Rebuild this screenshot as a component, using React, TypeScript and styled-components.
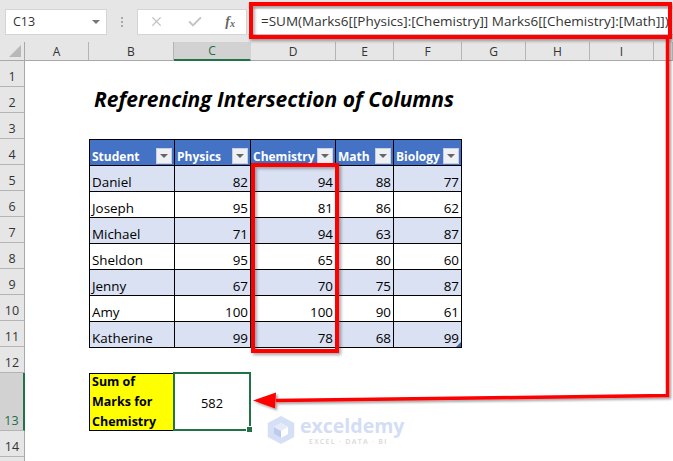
import { Check, X } from 'lucide-react';
import styled, { createGlobalStyle } from 'styled-components';

const COLUMNS = [
  { name: 'A', width: 64 },
  { name: 'B', width: 85 },
  { name: 'C', width: 77, selected: true },
  { name: 'D', width: 85 },
  { name: 'E', width: 58 },
  { name: 'F', width: 68 },
  { name: 'G', width: 64 },
  { name: 'H', width: 64 },
  { name: 'I', width: 64 },
  { name: '', width: 19 },
];

const ROWS = [
  { name: '1', height: 26 },
  { name: '2', height: 26 },
  { name: '3', height: 26 },
  { name: '4', height: 26 },
  { name: '5', height: 26 },
  { name: '6', height: 26 },
  { name: '7', height: 26 },
  { name: '8', height: 26 },
  { name: '9', height: 26 },
  { name: '10', height: 26 },
  { name: '11', height: 26 },
  { name: '12', height: 26 },
  { name: '13', height: 58, selected: true },
  { name: '14', height: 26 },
  { name: '', height: 26 },
];

const HEADERS = ['Student', 'Physics', 'Chemistry', 'Math', 'Biology'];

const MARKS: [string, number, number, number, number][] = [
  ['Daniel', 82, 94, 88, 77],
  ['Joseph', 95, 81, 86, 62],
  ['Michael', 71, 94, 63, 87],
  ['Sheldon', 95, 65, 80, 60],
  ['Jenny', 67, 70, 75, 87],
  ['Amy', 100, 100, 90, 61],
  ['Katherine', 99, 78, 68, 99],
];

const App = () => (
  <>
    <GlobalStyle />
    <Window>
      <FormulaBar>
        <NameBox>
          C13
          <NameCaret />
        </NameBox>
        <Grip>
          <i />
          <i />
          <i />
        </Grip>
        <FormulaButtons>
          <X size={15} strokeWidth={2} color="#c4c4c4" />
          <Check size={16} strokeWidth={3} color="#c4c4c4" />
          <FxLabel>
            f<sub>x</sub>
          </FxLabel>
        </FormulaButtons>
        <FormulaInput>=SUM(Marks6[[Physics]:[Chemistry]] Marks6[[Chemistry]:[Math]])</FormulaInput>
      </FormulaBar>

      <ColumnHeaders>
        <CornerCell>
          <CornerMark />
        </CornerCell>
        {COLUMNS.map((c, i) => (
          <ColumnHeader key={i} $width={c.width} $selected={c.selected}>
            {c.name}
          </ColumnHeader>
        ))}
      </ColumnHeaders>

      <SheetArea>
        <RowHeaders>
          {ROWS.map((r, i) => (
            <RowHeader key={i} $height={r.height} $selected={r.selected}>
              {r.name}
            </RowHeader>
          ))}
        </RowHeaders>

        <Sheet>
          <Title>Referencing Intersection of Columns</Title>

          <MarksTable>
            {HEADERS.map((h) => (
              <HeaderCell key={h}>
                {h}
                <FilterButton>
                  <FilterCaret />
                </FilterButton>
              </HeaderCell>
            ))}
            {MARKS.map((row, r) =>
              row.map((value, c) => (
                <Cell key={`${r}-${c}`} $band={r % 2 === 0} $numeric={c > 0}>
                  {value}
                </Cell>
              )),
            )}
            <ResizeHandle />
          </MarksTable>

          <SumLabel>
            <span>
              Sum of
              <br />
              Marks for
              <br />
              Chemistry
            </span>
          </SumLabel>
          <SumValue>
            582
            <FillHandle />
          </SumValue>

          <ChemistryHighlight />

          <Watermark>
            <svg width="32" height="30" viewBox="0 0 36 34">
              <path d="M18 1 33 9v16l-15 8-15-8V9z" fill="#d5dff5" />
              <path d="M18 9l8 4.5v8L18 26l-8-4.5v-8z" fill="#fff" />
              <path d="M18 9l8 4.5-8 4.5-8-4.5z" fill="#e6ebf8" />
              <path d="M18 18v8l-8-4.5v-8z" fill="#bccbee" />
            </svg>
            <WatermarkText>
              <strong>exceldemy</strong>
              <span>EXCEL · DATA · BI</span>
            </WatermarkText>
          </Watermark>
        </Sheet>
      </SheetArea>

      <FormulaHighlight />

      <ArrowLayer width="673" height="461" viewBox="0 0 673 461">
        <defs>
          <filter id="soft" x="-5%" y="-5%" width="110%" height="110%">
            <feDropShadow dx="2" dy="2" stdDeviation="1.2" floodColor="#000" floodOpacity="0.35" />
          </filter>
        </defs>
        <g filter="url(#soft)">
          <path d="M667.5 38V395.5L276 400.5" fill="none" stroke="#fe0000" strokeWidth="3.5" />
          <path d="M253 400.5 276 392.5 275 408.5z" fill="#fe0000" />
        </g>
      </ArrowLayer>
    </Window>
  </>
);

const GlobalStyle = createGlobalStyle`
  html, body {
    margin: 0;
    padding: 0;
    background: #fff;
  }

  body {
    font-family: "Open Sans", "Noto Sans", sans-serif;
    color: #000;
    overflow: hidden;
  }
`;

const Window = styled.div`
  position: relative;
  width: 673px;
  height: 461px;
  overflow: hidden;
  background: #fff;
`;

const FormulaBar = styled.div`
  display: flex;
  align-items: center;
  height: 42px;
  padding: 6px 0 5px 5px;
  box-sizing: border-box;
  background: #e6e6e6;
`;

const NameBox = styled.div`
  display: flex;
  align-items: center;
  justify-content: space-between;
  width: 102px;
  height: 26px;
  padding: 0 6px 0 7px;
  box-sizing: border-box;
  background: #fff;
  border: 1px solid #d4d4d4;
  font-size: 12.5px;
  color: #333;
`;

const NameCaret = styled.span`
  width: 0;
  height: 0;
  border-left: 4px solid transparent;
  border-right: 4px solid transparent;
  border-top: 4px solid #777;
`;

const Grip = styled.div`
  display: flex;
  flex-direction: column;
  gap: 2px;
  width: 30px;
  align-items: center;

  i {
    width: 2px;
    height: 2px;
    background: #a8a8a8;
  }
`;

const FormulaButtons = styled.div`
  display: flex;
  align-items: center;
  justify-content: space-between;
  width: 110px;
  height: 26px;
  padding: 0 11px 0 11px;
  box-sizing: border-box;
  background: #fff;
  border: 1px solid #d4d4d4;
`;

const FxLabel = styled.span`
  font-family: "Liberation Serif", serif;
  font-style: italic;
  font-weight: 700;
  font-size: 14px;
  line-height: 1;
  color: #666;

  sub {
    font-size: 10px;
    vertical-align: -1px;
  }
`;

const FormulaInput = styled.div`
  flex: 1;
  display: flex;
  align-items: center;
  height: 26px;
  margin-left: 1px;
  padding-left: 13px;
  box-sizing: border-box;
  background: #fff;
  border-bottom: 1px solid #c4c4c4;
  font-size: 13.5px;
  white-space: nowrap;
  color: #333;
`;

const ColumnHeaders = styled.div`
  display: flex;
  height: 19px;
`;

const CornerCell = styled.div`
  position: relative;
  width: 25px;
  flex-shrink: 0;
  background: #e6e6e6;
  border-right: 1px solid #a8a8a8;
  border-bottom: 1px solid #a8a8a8;
  box-sizing: border-box;
`;

const CornerMark = styled.span`
  position: absolute;
  right: 3px;
  bottom: 3px;
  width: 0;
  height: 0;
  border-left: 12px solid transparent;
  border-bottom: 12px solid #b8b8b8;
`;

const ColumnHeader = styled.div<{ $width: number; $selected?: boolean }>`
  width: ${(p) => p.$width}px;
  flex-shrink: 0;
  display: flex;
  align-items: center;
  justify-content: center;
  box-sizing: border-box;
  font-size: 12px;
  color: ${(p) => (p.$selected ? '#1f6b45' : '#333')};
  background: ${(p) => (p.$selected ? '#d2d2d2' : '#e6e6e6')};
  border-right: 1px solid ${(p) => (p.$selected ? '#d2d2d2' : '#b4b4b4')};
  border-bottom: ${(p) => (p.$selected ? '2px solid #217346' : '1px solid #a8a8a8')};
`;

const SheetArea = styled.div`
  display: flex;
`;

const RowHeaders = styled.div`
  width: 25px;
  flex-shrink: 0;
`;

const RowHeader = styled.div<{ $height: number; $selected?: boolean }>`
  height: ${(p) => p.$height}px;
  display: flex;
  align-items: flex-end;
  justify-content: center;
  padding-bottom: 1px;
  box-sizing: border-box;
  font-size: 12.5px;
  color: ${(p) => (p.$selected ? '#1f6b45' : '#333')};
  background: ${(p) => (p.$selected ? '#d2d2d2' : '#e6e6e6')};
  border-bottom: 1px solid #b4b4b4;
  border-right: ${(p) => (p.$selected ? '2px solid #217346' : '1px solid #a8a8a8')};
`;

const Sheet = styled.div`
  position: relative;
  flex: 1;
  display: grid;
  grid-template-columns: 64px 85px 77px 85px 58px 68px 1fr;
  grid-template-rows: repeat(12, 26px) 58px 26px 26px;
`;

const Title = styled.h1`
  grid-column: 2 / -1;
  grid-row: 2;
  margin: 0;
  align-self: end;
  padding: 0 0 1px 5px;
  font-family: "Open Sans", sans-serif;
  font-size: 21px;
  font-weight: 700;
  font-style: italic;
  line-height: 26px;
  white-space: nowrap;
`;

const MarksTable = styled.div`
  position: relative;
  grid-column: 2 / 7;
  grid-row: 4 / 12;
  display: grid;
  grid-template-columns: 85px 76px 85px 58px 68px;
  grid-auto-rows: 26px;
  align-self: start;
  justify-self: start;
  border-top: 1px solid #000;
  border-left: 1px solid #000;
`;

const HeaderCell = styled.div`
  display: flex;
  align-items: flex-end;
  justify-content: space-between;
  padding: 0 2px 1px 2px;
  box-sizing: border-box;
  background: #4472c4;
  border-right: 1px solid #000;
  border-bottom: 1px solid #000;
  font-size: 12px;
  font-weight: 700;
  line-height: 15px;
  color: #fff;
  white-space: nowrap;
`;

const FilterButton = styled.span`
  display: flex;
  align-items: center;
  justify-content: center;
  width: 16px;
  height: 16px;
  flex-shrink: 0;
  background: #eef0f4;
  border: 1px solid #c8d0e0;
  box-sizing: border-box;
`;

const FilterCaret = styled.span`
  width: 0;
  height: 0;
  border-left: 4px solid transparent;
  border-right: 4px solid transparent;
  border-top: 4px solid #666;
`;

const Cell = styled.div<{ $band: boolean; $numeric: boolean }>`
  display: flex;
  align-items: flex-end;
  justify-content: ${(p) => (p.$numeric ? 'flex-end' : 'flex-start')};
  padding: 0 2px;
  box-sizing: border-box;
  background: ${(p) => (p.$band ? '#d9e1f2' : '#fff')};
  border-right: 1px solid #000;
  border-bottom: 1px solid #000;
  font-size: 13.4px;
  line-height: 18px;
`;

const ResizeHandle = styled.span`
  position: absolute;
  right: 1px;
  bottom: 1px;
  width: 0;
  height: 0;
  border-left: 5px solid transparent;
  border-bottom: 5px solid #3f5f9f;
`;

const SumLabel = styled.div`
  grid-column: 2;
  grid-row: 13;
  display: flex;
  align-items: center;
  padding-left: 2px;
  min-height: 0;
  background: #ff0;
  border: 1px solid #000;
  font-size: 12.5px;
  font-weight: 700;
  line-height: 20px;
  color: #000;
  white-space: nowrap;
`;

const SumValue = styled.div`
  position: relative;
  grid-column: 3;
  grid-row: 13;
  margin: -1px 0 0 -1px;
  padding-top: 2px;
  display: flex;
  align-items: center;
  justify-content: center;
  background: #fff;
  border: 2px solid #217346;
  font-size: 12.8px;
`;

const FillHandle = styled.span`
  position: absolute;
  right: -4px;
  bottom: -4px;
  width: 5px;
  height: 5px;
  background: #217346;
  border: 1px solid #fff;
`;

const ChemistryHighlight = styled.div`
  position: absolute;
  left: 226px;
  top: 102px;
  width: 88px;
  height: 190px;
  box-sizing: border-box;
  border: 4px solid #fe0000;
  box-shadow: 2px 2px 3px rgba(0, 0, 0, 0.35), inset 2px 2px 3px rgba(0, 0, 0, 0.3);
`;

const FormulaHighlight = styled.div`
  position: absolute;
  left: 249px;
  top: 2px;
  width: 423px;
  height: 37px;
  box-sizing: border-box;
  border: 4px solid #fe0000;
  box-shadow: 1px 2px 3px rgba(0, 0, 0, 0.35), inset 2px 2px 3px rgba(0, 0, 0, 0.3);
`;

const ArrowLayer = styled.svg`
  position: absolute;
  inset: 0;
  pointer-events: none;
`;

const Watermark = styled.div`
  position: absolute;
  left: 240px;
  top: 353px;
  display: flex;
  align-items: center;
  gap: 3px;
`;

const WatermarkText = styled.div`
  display: flex;
  flex-direction: column;
  font-family: "Open Sans", sans-serif;

  strong {
    font-size: 19.5px;
    line-height: 23px;
    font-weight: 700;
    color: #d3ddf5;
  }

  span {
    font-size: 7px;
    line-height: 9px;
    font-weight: 600;
    letter-spacing: 1.3px;
    color: #d8d8d8;
    padding-left: 9px;
  }
`;

export default App;
